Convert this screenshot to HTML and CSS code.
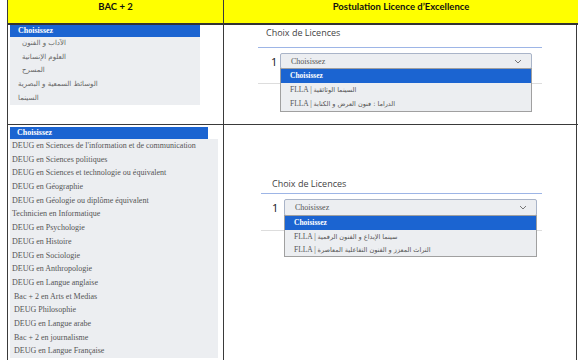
FILE: index.html
```html
<!DOCTYPE html>
<html lang="fr">
<head>
<meta charset="utf-8">
<title>BAC + 2 / Licence d'Excellence</title>
<link rel="stylesheet" href="styles.css">
</head>
<body>
<div class="sheet">
  <div class="head head-left">BAC + 2</div>
  <div class="head head-right">Postulation Licence d’Excellence</div>

  <div class="cell cell-left row1">
    <ul class="list list-short">
      <li class="list-active">Choisissez</li>
      <li class="ar">الآداب و الفنون</li>
      <li class="ar">العلوم الإنسانية</li>
      <li class="ar">المسرح</li>
      <li class="ar">الوسائط السمعية و البصرية</li>
      <li class="ar">السينما</li>
    </ul>
  </div>
  <div class="cell cell-right row1">
    <div class="form form-top">
      <div class="form-title">Choix de Licences</div>
      <div class="rule-blue"></div>
      <div class="choice">
        <span class="num">1</span>
        <div class="select">
          <span>Choisissez</span>
          <svg class="chev" width="8" height="5" viewBox="0 0 8 5"><path d="M1 1l3 3 3-3" fill="none" stroke="#777" stroke-width="1"/></svg>
          <ul class="menu">
            <li class="menu-active">Choisissez</li>
            <li>FLLA | <span class="ar">السينما الوثائقية</span></li>
            <li>FLLA | <span class="ar">الدراما : فنون العرض و الكتابة</span></li>
          </ul>
        </div>
      </div>
      <div class="rule-gray"></div>
    </div>
  </div>

  <div class="cell cell-left row2">
    <div class="list-active wide">Choisissez</div>
    <ul class="list list-long">
      <li>DEUG en Sciences de l'information et de communication</li>
      <li>DEUG en Sciences politiques</li>
      <li>DEUG en Sciences et technologie ou équivalent</li>
      <li>DEUG en Géographie</li>
      <li>DEUG en Géologie ou diplôme équivalent</li>
      <li>Technicien en Informatique</li>
      <li>DEUG en Psychologie</li>
      <li>DEUG en Histoire</li>
      <li>DEUG en Sociologie</li>
      <li>DEUG en Anthropologie</li>
      <li>DEUG en Langue anglaise</li>
      <li class="ind">Bac + 2 en Arts et Medias</li>
      <li class="ind">DEUG Philosophie</li>
      <li class="ind">DEUG en Langue arabe</li>
      <li class="ind">Bac + 2 en journalisme</li>
      <li class="ind">DEUG en Langue Française</li>
    </ul>
  </div>
  <div class="cell cell-right row2">
    <div class="form form-bottom">
      <div class="form-title">Choix de Licences</div>
      <div class="rule-blue"></div>
      <div class="choice">
        <span class="num">1</span>
        <div class="select">
          <span>Choisissez</span>
          <svg class="chev" width="8" height="5" viewBox="0 0 8 5"><path d="M1 1l3 3 3-3" fill="none" stroke="#777" stroke-width="1"/></svg>
          <ul class="menu">
            <li class="menu-active">Choisissez</li>
            <li>FLLA | <span class="ar">سينما الإبداع و الفنون الرقمية</span></li>
            <li>FLLA | <span class="ar">التراث المعزز و الفنون التفاعلية المعاصرة</span></li>
          </ul>
        </div>
      </div>
      <div class="rule-gray"></div>
    </div>
  </div>
</div>
</body>
</html>
```

FILE: styles.css
```css
* { box-sizing: border-box; }
html, body { margin: 0; padding: 0; }
body {
  width: 580px;
  height: 360px;
  overflow: hidden;
  background: #fff;
  font-family: "Liberation Serif", "DejaVu Sans", serif;
}
ul { list-style: none; margin: 0; padding: 0; }

.sheet {
  margin-left: 7px;
  width: 570px;
  display: grid;
  grid-template-columns: 216px 354px;
  grid-template-rows: 25px 100px 240px;
  border-left: 1.5px solid #3a3a3a;
  border-right: 1.5px solid #3a3a3a;
}

.head {
  background: #ffff00;
  border-bottom: 2px solid #333;
  font-family: Lato, "Liberation Sans", sans-serif;
  font-weight: 700;
  font-size: 9.5px;
  line-height: 11px;
  padding-top: 1px;
  text-align: center;
  color: #111;
}
.head-left { border-right: 1.5px solid #3a3a3a; }

.cell { position: relative; }
.cell-left { border-right: 1.5px solid #3a3a3a; padding-left: 2px; }
.row1 { border-bottom: 1.5px solid #3a3a3a; }

/* left lists */
.list-active {
  background: #1b64d1;
  color: #fff;
  font-weight: 700;
  font-size: 8px;
  height: 12px;
  line-height: 12px;
  padding-left: 7px;
}
.list { background: #eceef1; color: #555; font-size: 8px; }
.list-short { width: 190px; }
.list-short li { height: 13.7px; line-height: 13.7px; padding-left: 8px; }
.list-short li.list-active { height: 12px; line-height: 12px; }
.list-short li.ar { font-size: 7px; font-family: "DejaVu Sans", sans-serif; color: #666; }
.list-short li:nth-child(2), .list-short li:nth-child(3), .list-short li:nth-child(4) { padding-left: 12px; }

.row2.cell-left { padding-top: 2px; }
.wide { width: 198px; }
.list-long { width: 208px; }
.list-long li { height: 13.7px; line-height: 13.7px; padding-left: 2px; white-space: nowrap; }
.list-long li.ind { padding-left: 4px; }

/* right forms */
.form { position: relative; }
.form-top { margin-left: 34px; width: 284px; padding-top: 2px; }
.form-bottom { margin-left: 37px; width: 281px; padding-top: 53px; }

.form-title {
  font-family: "Open Sans", Roboto, sans-serif;
  font-size: 9px;
  line-height: 12px;
  color: #444;
  padding-left: 8px;
}
.form-bottom .form-title { padding-left: 11px; }

.rule-blue { height: 1px; background: #9db5e6; margin-top: 8px; }
.form-bottom .rule-blue { margin-top: 3px; }

.choice { display: flex; align-items: center; margin-top: 5px; }
.num {
  font-family: "Open Sans", Roboto, sans-serif;
  font-size: 11px;
  color: #111;
  width: 22px;
  padding-left: 13px;
}
.form-bottom .num { width: 23px; padding-left: 11px; }

.select {
  position: relative;
  width: 252px;
  height: 16px;
  border: 1px solid #a9b4c8;
  border-radius: 2px;
  background: #eceef1;
  display: flex;
  align-items: center;
  justify-content: space-between;
  padding: 0 9px 0 10px;
  font-size: 8px;
  color: #555;
}
.form-bottom .select { width: 253px; height: 17px; }

.menu {
  position: absolute;
  left: -1px;
  right: -1px;
  top: 100%;
  background: #eceef1;
  border: 1px solid #a0a0a0;
  font-size: 7.5px;
  color: #555;
  z-index: 2;
}
.menu li { height: 14px; line-height: 14px; padding-left: 9px; }
.menu li .ar { font-family: "DejaVu Sans", sans-serif; font-size: 6.5px; }
.menu .menu-active { background: #1b64d1; color: #fff; font-weight: 700; height: 14px; }
.form-bottom .menu li { height: 13px; line-height: 13px; }
.form-bottom .menu .menu-active { height: 14px; line-height: 14px; }

.rule-gray { height: 1px; background: #ddd; margin-top: 14px; }
```
